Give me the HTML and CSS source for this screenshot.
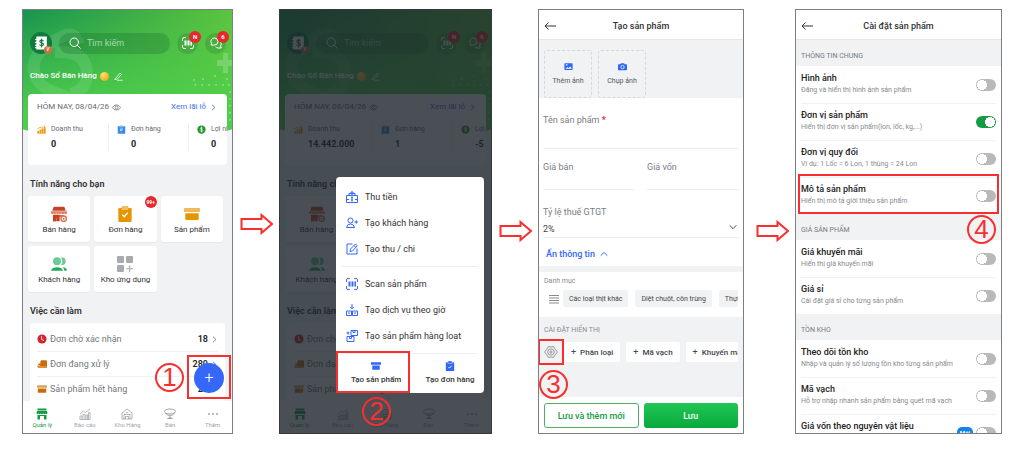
FILE: index.html
```html
<!DOCTYPE html>
<html lang="vi">
<head>
    <meta charset="UTF-8">
    <meta name="viewport" content="width=device-width, initial-scale=1.0">
    <title>Tạo sản phẩm</title>
    <link rel="stylesheet" href="styles.css">
</head>
<body>
    <!-- Icon sprite -->
    <svg class="sprite" aria-hidden="true">
        <symbol id="i-search" viewBox="0 0 24 24"><g fill="none" stroke="currentColor" stroke-width="2" stroke-linecap="round"><circle cx="10.5" cy="10.5" r="8.500"/><path d="M16.500 16.500L22.500 22.500"/></g></symbol>
        <symbol id="i-book" viewBox="0 0 24 24"><path fill="#fff" d="M4 1h18v22H4v-2H2v-2h2v-2H2v-2h2v-3H2v-2h2V7H2V5h2z"/><path fill="none" stroke="#14803f" stroke-width="2" d="M16 9c-.5-1.300-1.600-1.800-3-1.800-1.800 0-3 .8-3 2.300 0 3.200 6.200 1.500 6.200 4.800 0 1.600-1.300 2.500-3.200 2.500-1.700 0-3-.8-3.300-2.300M13 4.500v15"/></symbol>
        <symbol id="i-scan" viewBox="0 0 24 24"><path fill="none" stroke="currentColor" stroke-width="2" stroke-linecap="round" d="M1 7V4q0-3 3-3h3M17 1h3q3 0 3 3v3M23 17v3q0 3-3 3h-3M7 23H4q-3 0-3-3v-3"/><path fill="currentColor" d="M5 7h3v10H5zM9 7h1.500v10H9zM11.500 7h3v10h-3zM15.500 7h1v10h-1zM17.500 7H20v10h-2.500z"/></symbol>
        <symbol id="i-chat" viewBox="0 0 24 24"><path fill="none" stroke="currentColor" stroke-width="2" stroke-linejoin="round" d="M9 2a7 7 0 0 1 7 7 7 7 0 0 1-7 7H2l1-3A7 7 0 0 1 9 2zM18.500 7.500A7 7 0 0 1 21 18l1.500 4H16a7 7 0 0 1-5-2.500"/></symbol>
        <symbol id="i-edit" viewBox="0 0 24 24"><path fill="none" stroke="currentColor" stroke-width="2" stroke-linejoin="round" stroke-linecap="round" d="M4 17L16 3l4 3.500L8.500 19 3 20zM9 22h13"/></symbol>
        <symbol id="i-eye" viewBox="0 0 24 24"><g fill="none" stroke="currentColor" stroke-width="2"><path d="M1 12q4.500-7 11-7t11 7q-4.500 7-11 7T1 12z"/><circle cx="12" cy="12" r="4"/></g></symbol>
        <symbol id="i-right" viewBox="0 0 24 24"><path fill="none" stroke="currentColor" stroke-width="3" d="M7 3l10 9-10 9"/></symbol>
        <symbol id="i-bars" viewBox="0 0 24 24"><path fill="#f09a12" d="M1 15h5v8H1zM7 12h5v11H7zM13 9h4.500v14H13zM18.500 5H23v18h-4.500z"/><path fill="none" stroke="#f09a12" stroke-width="2" d="M1 11l7-5 4 2 9-6"/></symbol>
        <symbol id="i-clip" viewBox="0 0 24 24"><path fill="#3b8cea" d="M2 3h20v20H2z"/><path fill="#8dbdf5" d="M7 1h10v5H7z"/><path fill="none" stroke="#fff" stroke-width="2" d="M8 11h8M8 15h5"/></symbol>
        <symbol id="i-coin" viewBox="0 0 24 24"><circle cx="12" cy="12" r="11" fill="#22962a"/><path fill="none" stroke="#fff" stroke-width="2" d="M15.500 9c-.6-1.400-1.800-2-3.500-2s-3.300.9-3.300 2.500c0 3.500 6.800 1.500 6.800 5 0 1.700-1.500 2.600-3.500 2.600s-3.200-.8-3.700-2.200M12 4.500v15"/></symbol>
        <symbol id="i-shop" viewBox="0 0 24 24"><path fill="#c64322" d="M4 1h16l2 6H2zM3 13h10v10H8v-5H7v5H3z"/><path fill="#df8264" d="M0 8h24v3q-2 3-4 0-2 3-4 0-2 3-4 0-2 3-4 0-2 3-4 0-2 3-4 0z"/><path fill="#c64322" d="M3 14h16v2H8v7H3z"/><circle cx="19" cy="19" r="4" fill="#fff" stroke="#dc6c50" stroke-width="2"/><circle cx="19" cy="19" r="1.500" fill="#dc6c50"/></symbol>
        <symbol id="i-order" viewBox="0 0 24 24"><rect x="2" y="3" width="20" height="21" rx="2" fill="#e69500"/><path fill="#f2bd5a" d="M7 0h10v6H7z"/><path fill="none" stroke="#fff" stroke-width="2" d="M8 13l3 3 5-6"/></symbol>
        <symbol id="i-box" viewBox="0 0 24 24"><rect x="0" y="3" width="24" height="6" rx="1" fill="currentColor" opacity=".65"/><path fill="currentColor" d="M2 11h20v8q0 2-2 2H4q-2 0-2-2z"/></symbol>
        <symbol id="i-box-solid" viewBox="0 0 24 24"><path fill="currentColor" d="M0 3h24v6H0zM3 10.500h18V19q0 2-2 2H5q-2 0-2-2z"/></symbol>
        <symbol id="i-people" viewBox="0 0 24 24"><g fill="#6ccb93"><circle cx="9" cy="8" r="6"/><path d="M15 2.500q7-1 7 5.500t-7 5.500q4-5.500 0-11z"/></g><path fill="#20ad5b" d="M0 22q2-5 9-5t9 5zM17 17q6 0 7 5h-4q0-3-3-5z"/></symbol>
        <symbol id="i-apps" viewBox="0 0 24 24"><g fill="#a7abb0"><rect x="0" y="0" width="10.500" height="10.500" rx="1.500"/><rect x="13.500" y="0" width="10.500" height="10.500" rx="1.500"/><rect x="0" y="13.500" width="10.500" height="10.500" rx="1.500"/></g><path stroke="#b5b9be" stroke-width="2" d="M19 14v10M14 19h10"/></symbol>
        <symbol id="i-clock" viewBox="0 0 24 24"><circle cx="12" cy="12" r="11" fill="#d3252c"/><path fill="none" stroke="#fff" stroke-width="2" d="M11 5v8l6 3"/></symbol>
        <symbol id="i-ship" viewBox="0 0 24 24"><path fill="#cc6c08" d="M10 3h11q3 0 3 3v12H8V6zM0 16h8v2H0zM3 11h5v4H3z"/><path fill="#cc6c08" d="M2 18h22v3H2z"/></symbol>
        <symbol id="i-manage" viewBox="0 0 24 24"><path fill="currentColor" d="M3 1h18v4H3zM2 6h20l1 5q-2 3-4 0-2 3-4 0-3 3-6 0-2 3-4 0-2 3-4 0zM3 14h18v9h-5v-7H8v7H3z"/></symbol>
        <symbol id="i-report" viewBox="0 0 24 24"><path fill="none" stroke="currentColor" stroke-width="1.600" d="M1 23h22M2 22v-6h4v6M8 22v-9h4v9M14 22v-8h3v8M19 22V9h3v13M2 12l7-6 4 3 9-7"/></symbol>
        <symbol id="i-depot" viewBox="0 0 24 24"><path fill="none" stroke="currentColor" stroke-width="1.700" d="M2 22V10l10-8 10 8v12zM6 22v-9h12v9M9 22v-5h6v5M10 9h4"/></symbol>
        <symbol id="i-table" viewBox="0 0 24 24"><g fill="none" stroke="currentColor" stroke-width="2"><ellipse cx="12" cy="7" rx="11" ry="5"/><path d="M3 10q2 5 9 5t9-5M12 15v4M7 21q5-4 10 0z"/></g></symbol>
        <symbol id="i-dots" viewBox="0 0 24 24"><g fill="currentColor"><circle cx="4" cy="12" r="2"/><circle cx="12" cy="12" r="2"/><circle cx="20" cy="12" r="2"/></g></symbol>
        <symbol id="i-money" viewBox="0 0 24 24"><path fill="none" stroke="currentColor" stroke-width="2" d="M1 9h22v14H1zM1 17h5M18 17h5M6 9V5h12v4M12 1v7M9 4l3-3 3 3"/><path fill="none" stroke="currentColor" stroke-width="2" d="M12 11v10M10 13.500h4M10 18h4"/></symbol>
        <symbol id="i-useradd" viewBox="0 0 24 24"><g fill="none" stroke="currentColor" stroke-width="2"><circle cx="9" cy="7" r="5"/><path d="M1 21q1-7 8-7t8 7zM17 10h7M20.500 6.500v7"/></g></symbol>
        <symbol id="i-note" viewBox="0 0 24 24"><path fill="none" stroke="currentColor" stroke-width="2" d="M13 2H2v20h20V11M8 17l1-5L19 2l3.500 3.500L13 16zM16 5l3.500 3.500"/></symbol>
        <symbol id="i-service" viewBox="0 0 24 24"><path fill="none" stroke="currentColor" stroke-width="2" d="M1 14h10v9H1zM13 14h10v9H13zM12 0v9M8.500 6L12 9.500 15.500 6M4 18h4M16 18h4"/></symbol>
        <symbol id="i-batch" viewBox="0 0 24 24"><path fill="none" stroke="currentColor" stroke-width="2" d="M10 1h13v10H10zM2 13h14v10H2zM14 1v4h4V1M7 13v4h4v-4M1 6h6M4 3v6"/></symbol>
        <symbol id="i-check" viewBox="0 0 24 24"><rect x="2" y="3" width="20" height="21" rx="2" fill="#2f66fa"/><path fill="#2f66fa" stroke="#fff" d="M7 0h10v6H7z"/><path fill="none" stroke="#fff" stroke-width="2" d="M8 14l3 3 5-6"/></symbol>
        <symbol id="i-back" viewBox="0 0 24 24"><path fill="none" stroke="currentColor" stroke-width="2" d="M9 5l-7 7 7 7M2 12h22"/></symbol>
        <symbol id="i-image" viewBox="0 0 24 24"><rect x="1" y="3" width="22" height="18" rx="2" fill="#2f66fa"/><path fill="#fff" d="M4 18l5-5 3 3 5-4 4 6zM5 6h4v3H5z"/></symbol>
        <symbol id="i-camera" viewBox="0 0 24 24"><path fill="#2f66fa" d="M8 3h8l2 3h4q2 0 2 2v12q0 2-2 2H2q-2 0-2-2V8q0-2 2-2h4z"/><circle cx="12" cy="13.500" r="4.500" fill="none" stroke="#fff" stroke-width="2"/></symbol>
        <symbol id="i-down" viewBox="0 0 24 24"><path fill="none" stroke="currentColor" stroke-width="3" d="M2 7l10 10L22 7"/></symbol>
        <symbol id="i-up" viewBox="0 0 24 24"><path fill="none" stroke="currentColor" stroke-width="3" d="M2 17L12 7l10 10"/></symbol>
        <symbol id="i-menu" viewBox="0 0 24 24"><path stroke="currentColor" stroke-width="2" d="M2 5h20M2 10h20M2 15h20M2 20h20"/></symbol>
        <symbol id="i-gear" viewBox="0 0 24 24"><g fill="none" stroke="currentColor" stroke-width="1.500" stroke-linejoin="round"><path d="M7.500 2.500q4.500 2 9 0l2 4L23 12l-4.500 5.500-2 4q-4.500-2-9 0l-2-4L1 12l4.500-5.500z"/><path d="M9 7h6l3 5-3 5H9l-3-5z"/><circle cx="12" cy="12" r="2"/></g></symbol>
        <symbol id="i-arrow" viewBox="0 0 34 22"><path fill="#fff" stroke="#f92f2f" stroke-width="2" d="M1.500 6h20V2L32 11 21.500 20v-4h-20z"/></symbol>
        <symbol id="i-deco" viewBox="0 0 210 124">
            <g fill="none" stroke="#fff" stroke-opacity=".1" stroke-width="12"><path d="M56 34q-4-14-16-8C22 34 6 48 12 64q4 14 24 20 20 8 28 24"/><path d="M32 42q30-2 32 18t-16 24"/></g>
            <path fill="#fff" fill-opacity=".2" d="M201 43h5v7h5v6h-5v7h-5v-7h-6v-6h6z"/>
            <path fill="none" stroke="#fff" stroke-opacity=".35" stroke-width="2" stroke-linecap="round" d="M172 70h0M181 69h0M193 66h0M205 69h0M173 75h0M180 75h0M187 75h0M194 75h0M201 75h0M207 75h0M208 82h0M208 89h0M208 96h0M208 103h0M208 110h0"/>
        </symbol>
    </svg>

    <main class="guide">
        <!-- Step 1: home -->
        <section class="phone home">
            <header class="hero">
                <svg class="hero-deco"><use href="#i-deco"/></svg>
                <div class="hero-bar">
                    <span class="avatar"><svg class="icon-14"><use href="#i-book"/></svg><i class="avatar-mark">v</i></span>
                    <label class="search"><svg class="icon-12"><use href="#i-search"/></svg><input type="search" placeholder="Tìm kiếm" aria-label="Tìm kiếm"></label>
                    <button class="round" aria-label="Quét mã"><svg class="icon-12"><use href="#i-scan"/></svg><span class="badge">N</span></button>
                    <button class="round" aria-label="Tin nhắn"><svg class="icon-12"><use href="#i-chat"/></svg><span class="badge">6</span></button>
                </div>
                <p class="greeting">Chào Sổ Bán Hàng <i class="gold"></i> <svg class="icon-9"><use href="#i-edit"/></svg></p>
            </header>
            <div class="summary">
                <div class="summary-top">
                    <span>HÔM NAY, 08/04/26</span>
                    <svg class="icon-9"><use href="#i-eye"/></svg>
                    <a href="#">Xem lãi lỗ <svg class="icon-7"><use href="#i-right"/></svg></a>
                </div>
                <div class="stats">
                    <div class="stat"><svg class="icon-9"><use href="#i-bars"/></svg><span>Doanh thu</span><b>0</b></div>
                    <div class="stat"><svg class="icon-9"><use href="#i-clip"/></svg><span>Đơn hàng</span><b>0</b></div>
                    <div class="stat"><svg class="icon-9"><use href="#i-coin"/></svg><span>Lợi nhuận</span><b>0</b></div>
                </div>
            </div>
            <h2 class="heading">Tính năng cho bạn</h2>
            <div class="tiles">
                <button class="tile"><svg class="icon-16"><use href="#i-shop"/></svg>Bán hàng</button>
                <button class="tile"><svg class="icon-16"><use href="#i-order"/></svg>Đơn hàng<span class="badge">99+</span></button>
                <button class="tile"><svg class="icon-16 amber"><use href="#i-box"/></svg>Sản phẩm</button>
                <button class="tile"><svg class="icon-16"><use href="#i-people"/></svg>Khách hàng</button>
                <button class="tile"><svg class="icon-16"><use href="#i-apps"/></svg>Kho ứng dụng</button>
            </div>
            <h2 class="heading">Việc cần làm</h2>
            <ul class="todo">
                <li><svg class="icon-10"><use href="#i-clock"/></svg>Đơn chờ xác nhận<b>18</b><svg class="icon-7"><use href="#i-right"/></svg></li>
                <li><svg class="icon-10"><use href="#i-ship"/></svg>Đơn đang xử lý<b>289</b><svg class="icon-7"><use href="#i-right"/></svg></li>
                <li><svg class="icon-10 brown"><use href="#i-box"/></svg>Sản phẩm hết hàng<b>20</b><svg class="icon-7"><use href="#i-right"/></svg></li>
            </ul>
            <nav class="tabs">
                <a class="active" href="#"><svg class="icon-12"><use href="#i-manage"/></svg>Quản lý</a>
                <a href="#"><svg class="icon-12"><use href="#i-report"/></svg>Báo cáo</a>
                <a href="#"><svg class="icon-12"><use href="#i-depot"/></svg>Kho Hàng</a>
                <a href="#"><svg class="icon-12"><use href="#i-table"/></svg>Bàn</a>
                <a href="#"><svg class="icon-12"><use href="#i-dots"/></svg>Thêm</a>
            </nav>
            <button class="fab" aria-label="Tạo mới">+</button>
            <span class="mark mark-fab"></span>
            <span class="step step-1">1</span>
        </section>

        <svg class="arrow arrow-first"><use href="#i-arrow"/></svg>

        <!-- Step 2: create menu over the home screen -->
        <section class="phone home dimmed">
            <header class="hero">
                <svg class="hero-deco"><use href="#i-deco"/></svg>
                <div class="hero-bar">
                    <span class="avatar"><svg class="icon-14"><use href="#i-book"/></svg><i class="avatar-mark">v</i></span>
                    <label class="search"><svg class="icon-12"><use href="#i-search"/></svg><input type="search" placeholder="Tìm kiếm" aria-label="Tìm kiếm"></label>
                    <button class="round" aria-label="Quét mã"><svg class="icon-12"><use href="#i-scan"/></svg><span class="badge">N</span></button>
                    <button class="round" aria-label="Tin nhắn"><svg class="icon-12"><use href="#i-chat"/></svg><span class="badge">6</span></button>
                </div>
                <p class="greeting">Chào Sổ Bán Hàng <i class="gold"></i> <svg class="icon-9"><use href="#i-edit"/></svg></p>
            </header>
            <div class="summary">
                <div class="summary-top">
                    <span>HÔM NAY, 08/04/26</span>
                    <svg class="icon-9"><use href="#i-eye"/></svg>
                    <a href="#">Xem lãi lỗ <svg class="icon-7"><use href="#i-right"/></svg></a>
                </div>
                <div class="stats">
                    <div class="stat stat-wide"><svg class="icon-9"><use href="#i-bars"/></svg><span>Doanh thu</span><b>14.442.000</b></div>
                    <div class="stat"><svg class="icon-9"><use href="#i-clip"/></svg><span>Đơn hàng</span><b>1</b></div>
                    <div class="stat"><svg class="icon-9"><use href="#i-coin"/></svg><span>Lợi nhuận</span><b>-5</b></div>
                </div>
            </div>
            <h2 class="heading">Tính năng cho bạn</h2>
            <div class="tiles">
                <button class="tile"><svg class="icon-16"><use href="#i-shop"/></svg>Bán hàng</button>
                <button class="tile"><svg class="icon-16"><use href="#i-order"/></svg>Đơn hàng</button>
                <button class="tile"><svg class="icon-16 amber"><use href="#i-box"/></svg>Sản phẩm</button>
                <button class="tile"><svg class="icon-16"><use href="#i-people"/></svg>Khách hàng</button>
                <button class="tile"><svg class="icon-16"><use href="#i-apps"/></svg>Kho ứng dụng</button>
            </div>
            <h2 class="heading">Việc cần làm</h2>
            <ul class="todo">
                <li><svg class="icon-10"><use href="#i-clock"/></svg>Đơn chờ xác nhận</li>
                <li><svg class="icon-10"><use href="#i-ship"/></svg>Đơn đang xử lý</li>
                <li><svg class="icon-10 brown"><use href="#i-box"/></svg>Sản phẩm hết hàng</li>
            </ul>
            <nav class="tabs">
                <a class="active" href="#"><svg class="icon-12"><use href="#i-manage"/></svg>Quản lý</a>
                <a href="#"><svg class="icon-12"><use href="#i-report"/></svg>Báo cáo</a>
                <a href="#"><svg class="icon-12"><use href="#i-depot"/></svg>Kho Hàng</a>
                <a href="#"><svg class="icon-12"><use href="#i-table"/></svg>Bàn</a>
                <a href="#"><svg class="icon-12"><use href="#i-dots"/></svg>Thêm</a>
            </nav>
            <div class="overlay"></div>
            <div class="menu">
                <button><svg class="icon-12"><use href="#i-money"/></svg>Thu tiền</button>
                <button><svg class="icon-12"><use href="#i-useradd"/></svg>Tạo khách hàng</button>
                <button><svg class="icon-12"><use href="#i-note"/></svg>Tạo thu / chi</button>
                <hr>
                <button><svg class="icon-12"><use href="#i-scan"/></svg>Scan sản phẩm</button>
                <button><svg class="icon-12"><use href="#i-service"/></svg>Tạo dịch vụ theo giờ</button>
                <button><svg class="icon-12"><use href="#i-batch"/></svg>Tạo sản phẩm hàng loạt</button>
                <hr class="hr-tight">
                <div class="menu-main">
                    <button><svg class="icon-10"><use href="#i-box-solid"/></svg>Tạo sản phẩm</button>
                    <button><svg class="icon-10"><use href="#i-check"/></svg>Tạo đơn hàng</button>
                </div>
                <span class="mark mark-create"></span>
            </div>
            <span class="step step-2">2</span>
        </section>

        <svg class="arrow"><use href="#i-arrow"/></svg>

        <!-- Step 3: product form -->
        <section class="phone form">
            <header class="title-bar">
                <button aria-label="Quay lại"><svg class="icon-12"><use href="#i-back"/></svg></button>
                <h1>Tạo sản phẩm</h1>
            </header>
            <div class="photos">
                <button><svg class="icon-9"><use href="#i-image"/></svg>Thêm ảnh</button>
                <button><svg class="icon-9"><use href="#i-camera"/></svg>Chụp ảnh</button>
            </div>
            <div class="fields">
                <div class="field field-name"><label for="name">Tên sản phẩm <em>*</em></label><input id="name" type="text"></div>
                <div class="field"><label for="price">Giá bán</label><input id="price" type="text"></div>
                <div class="field"><label for="cost">Giá vốn</label><input id="cost" type="text"></div>
                <div class="field field-tax">
                    <label for="tax">Tỷ lệ thuế GTGT</label>
                    <select id="tax"><option>2%</option></select>
                    <svg class="icon-8"><use href="#i-down"/></svg>
                </div>
            </div>
            <button class="toggle-info">Ẩn thông tin <svg class="icon-8"><use href="#i-up"/></svg></button>
            <div class="category">
                <p>Danh mục</p>
                <div class="chips">
                    <svg class="icon-12"><use href="#i-menu"/></svg>
                    <button>Các loại thịt khác</button>
                    <button>Diệt chuột, côn trùng</button>
                    <button>Thực phẩm</button>
                </div>
            </div>
            <div class="display">
                <p>CÀI ĐẶT HIỂN THỊ</p>
                <div class="chips chips-add">
                    <button class="gear" aria-label="Cài đặt hiển thị"><svg class="icon-14"><use href="#i-gear"/></svg><span class="mark mark-gear"></span></button>
                    <button><span>+</span> Phân loại</button>
                    <button><span>+</span> Mã vạch</button>
                    <button><span>+</span> Khuyến mãi</button>
                </div>
            </div>
            <footer class="actions">
                <button class="btn-outline">Lưu và thêm mới</button>
                <button class="btn-primary">Lưu</button>
            </footer>
            <span class="step step-3">3</span>
        </section>

        <svg class="arrow"><use href="#i-arrow"/></svg>

        <!-- Step 4: product settings -->
        <section class="phone settings">
            <header class="title-bar">
                <button aria-label="Quay lại"><svg class="icon-12"><use href="#i-back"/></svg></button>
                <h1>Cài đặt sản phẩm</h1>
            </header>
            <h2>THÔNG TIN CHUNG</h2>
            <label class="option"><span><b>Hình ảnh</b><small>Đăng và hiển thị hình ảnh sản phẩm</small></span><input type="checkbox"></label>
            <label class="option"><span><b>Đơn vị sản phẩm</b><small>Hiển thị đơn vị sản phẩm(lon, lốc, kg,...)</small></span><input type="checkbox" checked></label>
            <label class="option"><span><b>Đơn vị quy đổi</b><small>Ví dụ: 1 Lốc = 6 Lon, 1 thùng = 24 Lon</small></span><input type="checkbox"></label>
            <label class="option"><span><b>Mô tả sản phẩm</b><small>Hiển thị mô tả giới thiệu sản phẩm</small></span><input type="checkbox"><i class="mark mark-option"></i></label>
            <h2>GIÁ SẢN PHẨM</h2>
            <label class="option"><span><b>Giá khuyến mãi</b><small>Hiển thị giá khuyến mãi</small></span><input type="checkbox"></label>
            <label class="option"><span><b>Giá sỉ</b><small>Cài đặt giá sỉ cho từng sản phẩm</small></span><input type="checkbox"></label>
            <h2>TỒN KHO</h2>
            <label class="option"><span><b>Theo dõi tồn kho</b><small>Nhập và quản lý số lượng tồn kho từng sản phẩm</small></span><input type="checkbox"></label>
            <label class="option"><span><b>Mã vạch</b><small>Hỗ trợ nhập nhanh sản phẩm bằng quét mã vạch</small></span><input type="checkbox"></label>
            <label class="option"><span><b>Giá vốn theo nguyên vật liệu</b><small>&nbsp;</small></span><mark>Mới</mark><input type="checkbox"></label>
            <span class="step step-4">4</span>
        </section>
    </main>
</body>
</html>
```
FILE: styles.css
```css
* {
    box-sizing: border-box;
}
body {
    margin: 0;
    background-color: #fff;
    color: #333;
    font-family: Roboto, 'Noto Sans', sans-serif;
    font-size: 8px;
    line-height: 12px;
}
button, input, select {
    font: inherit;
    color: inherit;
    background: none;
    border: none;
    padding: 0;
    margin: 0;
    min-width: 0;
}
button {
    cursor: pointer;
}
a {
    color: inherit;
    text-decoration: none;
}
h1, h2, p, ul {
    margin: 0;
    padding: 0;
}
.sprite {
    display: none;
}
svg {
    flex: none;
}
.icon-7 { width: 7px; height: 7px; }
.icon-8 { width: 8px; height: 8px; }
.icon-9 { width: 9px; height: 9px; }
.icon-10 { width: 10px; height: 10px; }
.icon-12 { width: 12px; height: 12px; }
.icon-14 { width: 14px; height: 14px; }
.icon-16 { width: 16px; height: 16px; }
.amber { color: #e69500; }
.brown { color: #cc6c08; }

.guide {
    display: grid;
    grid-template-columns: 211fr 46fr 213fr 46fr 206fr 51fr 207fr;
    grid-template-rows: minmax(0, 1fr);
    height: 100vh;
    padding: 9px 22px 16px;
}
.phone {
    position: relative;
    display: flex;
    flex-direction: column;
    min-width: 0;
    overflow: hidden;
    border: 1px solid #7c7f82;
    background-color: #f1f2f4;
}
.arrow {
    align-self: center;
    justify-self: end;
    width: 34px;
    height: 22px;
    margin-top: 19px;
    margin-right: 5px;
}
.arrow-first {
    margin-top: 5px;
}

/* Annotations */
.mark {
    position: absolute;
    border: 2px solid #f92f2f;
    pointer-events: none;
}
.step {
    position: absolute;
    width: 29px;
    height: 29px;
    border: 2px solid #f92f2f;
    border-radius: 50%;
    color: #f92f2f;
    font-family: 'Liberation Sans', sans-serif;
    font-size: 26px;
    line-height: 25px;
    text-align: center;
}
.mark-fab { right: 1px; bottom: 34px; width: 44px; height: 44px; }
.mark-create { left: 0; bottom: 0; width: 50%; height: 42px; }
.mark-gear { inset: -3px -6px; }
.mark-option { inset: -3px 2px 0; }
.step-1 { right: 48px; bottom: 41px; }
.step-2 { left: 82px; bottom: 7px; }
.step-3 { left: 0; bottom: 34px; }
.step-4 { right: 5px; top: 205px; }

/* Home */
.hero {
    position: relative;
    height: 124px;
    padding: 22px 6px 0 7px;
    border-radius: 0 0 50% 50% / 0 0 5px 5px;
    background: linear-gradient(to bottom, rgba(78, 207, 76, 0), #4ecf4c 85%), linear-gradient(100deg, #189350, #64c93c);
    color: #fff;
}
.hero-deco {
    position: absolute;
    inset: 0;
    width: 100%;
    height: 100%;
}
.hero-bar {
    position: relative;
    display: flex;
    align-items: center;
    gap: 7px;
}
.avatar, .round {
    position: relative;
    display: flex;
    align-items: center;
    justify-content: center;
    flex: none;
    border-radius: 50%;
}
.avatar {
    width: 22px;
    height: 22px;
    background-color: #117a3d;
}
.avatar-mark {
    position: absolute;
    right: 0;
    bottom: 0;
    width: 8px;
    height: 8px;
    border-radius: 50%;
    background-color: #c9703f;
    font-size: 7px;
    line-height: 7px;
    text-align: center;
}
.search {
    display: flex;
    align-items: center;
    flex: 1;
    gap: 6px;
    min-width: 0;
    height: 21px;
    padding: 0 10px;
    border-radius: 11px;
    background-color: rgba(20, 90, 40, .25);
}
.search input {
    flex: 1;
    width: 100%;
    outline: none;
    font-size: 9px;
}
.search input::placeholder {
    color: #a4dba9;
    opacity: 1;
}
.round {
    width: 21px;
    height: 21px;
    background-color: rgba(20, 90, 40, .2);
}
.badge {
    position: absolute;
    top: -2px;
    right: -3px;
    width: 12px;
    height: 12px;
    border-radius: 50%;
    background-color: #e8282d;
    color: #fff;
    font-size: 6px;
    font-weight: 700;
    line-height: 12px;
    text-align: center;
}
.greeting {
    position: relative;
    display: flex;
    align-items: center;
    gap: 3px;
    margin-top: 16px;
    font-weight: 500;
}
.greeting svg {
    margin-left: 2px;
}
.gold {
    width: 9px;
    height: 9px;
    border-radius: 50%;
    background: radial-gradient(circle at 35% 30%, #ffe27a, #f3a91d 75%);
}
.summary {
    position: relative;
    overflow: hidden;
    margin: -40px 5px 0;
    padding: 7px 0 14px 9px;
    border-radius: 4px;
    background-color: #fff;
}
.summary-top {
    display: flex;
    align-items: center;
    gap: 3px;
    padding-right: 10px;
    color: #666a70;
}
.summary-top a {
    display: flex;
    align-items: center;
    gap: 4px;
    margin-left: auto;
    color: #3f6ff5;
}
.stats {
    display: flex;
    margin-top: 11px;
}
.stat {
    display: grid;
    grid-template-columns: 9px 1fr;
    align-items: center;
    column-gap: 5px;
    row-gap: 3px;
    flex: none;
    width: 72px;
    margin-right: 8px;
    border-right: 1px solid #eee;
    color: #666a70;
    font-size: 7px;
    line-height: 11px;
}
.stat-wide {
    width: 79px;
}
.stat span {
    white-space: nowrap;
}
.stat b {
    grid-column: 2;
    color: #222;
    font-size: 9px;
    line-height: 13px;
}
.heading {
    margin: 12px 7px 0;
    font-size: 9px;
    font-weight: 600;
    line-height: 14px;
}
.tiles {
    display: grid;
    grid-template-columns: repeat(3, 1fr);
    gap: 4px;
    padding: 5px 9px 0 5px;
}
.tile {
    position: relative;
    display: flex;
    flex-direction: column;
    align-items: center;
    gap: 2px;
    height: 46px;
    padding-top: 10px;
    border-radius: 3px;
    background-color: #fff;
    box-shadow: 0 1px 1px rgba(0, 0, 0, .04);
    white-space: nowrap;
}
.tile .badge {
    top: 0;
    right: 0;
    font-size: 5px;
}
.todo {
    flex: 1;
    min-height: 0;
    overflow: hidden;
    margin: 5px 7px 0;
    padding: 4px 7px 0;
    border-radius: 4px 4px 0 0;
    background-color: #fff;
    list-style: none;
}
.todo li {
    display: flex;
    align-items: center;
    gap: 3px;
    height: 25px;
    border-bottom: 1px solid #f0f0f0;
    color: #75787c;
    font-size: 9px;
}
.todo b {
    margin-left: auto;
    color: #222;
    font-weight: 600;
}
.tabs {
    display: grid;
    grid-template-columns: repeat(5, 1fr);
    flex: none;
    height: 32px;
    margin: 0 -2px;
    padding-top: 7px;
    background-color: #fff;
    color: #a3a6aa;
    font-size: 6px;
    line-height: 9px;
}
.tabs a {
    display: flex;
    flex-direction: column;
    align-items: center;
}
.tabs .active {
    color: #169b45;
}
.fab {
    position: absolute;
    right: 8px;
    bottom: 40px;
    width: 30px;
    height: 30px;
    border-radius: 50%;
    background-color: #3567fb;
    color: #fff;
    font-size: 16px;
    font-weight: 300;
    line-height: 30px;
}

/* Create menu */
.dimmed {
    border-color: #35393e;
}
.overlay {
    position: absolute;
    inset: 0;
    background-color: rgba(27, 35, 43, .8);
}
.menu {
    position: absolute;
    right: 7px;
    bottom: 40px;
    width: 148px;
    padding-top: 7px;
    border-radius: 4px;
    background-color: #fff;
    color: #333;
    font-size: 9px;
}
.menu > button {
    display: flex;
    align-items: center;
    gap: 7px;
    width: 100%;
    height: 26px;
    padding: 0 10px;
}
.menu svg {
    color: #3567fb;
}
.menu hr {
    height: 1px;
    margin: 4px 6px;
    border: none;
    background-color: #eee;
}
.menu .hr-tight {
    margin-bottom: 0;
}
.menu-main {
    display: grid;
    grid-template-columns: 76fr 68fr;
}
.menu-main button {
    display: flex;
    flex-direction: column;
    align-items: center;
    gap: 3px;
    height: 39px;
    padding: 7px 0 0 2px;
    font-size: 8px;
    font-weight: 500;
    white-space: nowrap;
}

/* Title bar shared by the form and the settings */
.title-bar {
    display: grid;
    grid-template-columns: 12px 1fr 12px;
    align-items: center;
    flex: none;
    height: 30px;
    padding: 2px 5px 0;
    border-bottom: 1px solid #e6e7e9;
    background-color: #fff;
}
.title-bar button {
    display: flex;
}
.title-bar h1 {
    font-size: 9px;
    font-weight: 500;
    text-align: center;
}

/* Product form */
.photos {
    display: flex;
    gap: 6px;
    padding: 10px 5px 0;
}
.photos button {
    display: flex;
    flex-direction: column;
    align-items: center;
    justify-content: center;
    gap: 4px;
    width: 48px;
    height: 48px;
    border: 1px dashed #d5d7da;
    border-radius: 3px;
    color: #55585c;
    font-size: 7px;
}
.fields {
    display: grid;
    grid-template-columns: 91fr 92fr;
    column-gap: 13px;
    padding: 15px 4px 0;
    background-color: #fff;
}
.field {
    position: relative;
    display: flex;
    flex-direction: column;
    height: 41px;
    border-bottom: 1px solid #ececee;
    color: #7a7d82;
    font-size: 9px;
}
.field label {
    height: 15px;
    line-height: 15px;
}
.field em {
    color: #e8282d;
    font-style: normal;
    font-weight: 700;
}
.field input {
    flex: 1;
    width: 100%;
    outline: none;
}
.field-name {
    grid-column: 1 / -1;
    height: 36px;
}
.field:not(.field-name) {
    padding-top: 11px;
}
.field.field-tax {
    grid-column: 1 / -1;
    height: 48px;
    padding-top: 15px;
}
.field-tax select {
    flex: 1;
    appearance: none;
    color: #44474b;
}
.field-tax svg {
    position: absolute;
    right: 2px;
    bottom: 6px;
    color: #44474b;
}
.toggle-info {
    display: flex;
    align-items: center;
    gap: 5px;
    height: 28px;
    padding: 4px 7px 0;
    background-color: #fff;
    color: #3567fb;
    font-size: 9px;
    font-weight: 500;
}
.category {
    margin-top: 6px;
    padding: 3px 5px 10px;
    background-color: #fff;
    color: #888b90;
    font-size: 7px;
}
.chips {
    display: flex;
    align-items: center;
    gap: 7px;
    overflow: hidden;
    margin-top: 3px;
}
.chips > svg {
    margin: 0 -4px 0 4px;
}
.chips button {
    flex: none;
    height: 17px;
    padding: 0 6px;
    border-radius: 2px;
    background-color: #f1f2f4;
    color: #44474b;
    white-space: nowrap;
}
.display {
    flex: 1;
    padding: 7px 5px 0;
    color: #888b90;
    font-size: 7px;
}
.chips-add {
    gap: 6px;
    margin: 2px 0 0 -5px;
    padding: 4px 0 4px 5px;
}
.chips-add button {
    height: 20px;
    padding: 0 7px;
    background-color: #fff;
    font-size: 8px;
    font-weight: 500;
}
.chips-add button > span:not(.mark) {
    margin-right: 2px;
    font-size: 9px;
    font-weight: 400;
}
.chips-add .gear {
    position: relative;
    display: flex;
    align-items: center;
    padding: 0;
    background: none;
    color: #888b90;
}
.actions {
    display: grid;
    grid-template-columns: 1fr 1fr;
    gap: 5px;
    padding: 6px 5px 5px;
    background-color: #fff;
}
.actions button {
    height: 25px;
    border-radius: 3px;
    font-size: 9px;
    font-weight: 500;
}
.btn-outline {
    border: 1px solid #4cae68;
    color: #169b45;
}
.actions .btn-primary {
    background: linear-gradient(#21c654, #07a93c);
    color: #fff;
}

/* Product settings */
.settings h2 {
    flex: none;
    height: 26px;
    padding: 5px 5px 0;
    color: #777a7f;
    font-size: 7px;
    font-weight: 400;
    line-height: 22px;
}
.option {
    position: relative;
    display: flex;
    align-items: center;
    flex: none;
    gap: 3px;
    height: 37px;
    padding: 0 5px;
    background-color: #fff;
}
.option + .option {
    background: linear-gradient(#f1f1f2, #f1f1f2) 5px 0 / calc(100% - 10px) 1px no-repeat #fff;
}
.option span {
    flex: 1;
    white-space: nowrap;
}
.option b {
    display: block;
    color: #222;
    font-size: 9px;
    font-weight: 500;
}
.option small {
    display: block;
    color: #888b90;
    font-size: 7px;
    line-height: 13px;
}
.option mark {
    padding: 0 3px;
    border-radius: 5px;
    background-color: #1683e8;
    color: #fff;
    font-size: 6px;
    font-weight: 700;
    line-height: 12px;
}
.option input {
    appearance: none;
    flex: none;
    width: 20px;
    height: 12px;
    border-radius: 6px;
    background: radial-gradient(circle at 6px 6px, #fff 5px, #b9b9ba 5px);
}
.option input:checked {
    background: radial-gradient(circle at 14px 6px, #fff 5px, #169b45 5px);
}
```
